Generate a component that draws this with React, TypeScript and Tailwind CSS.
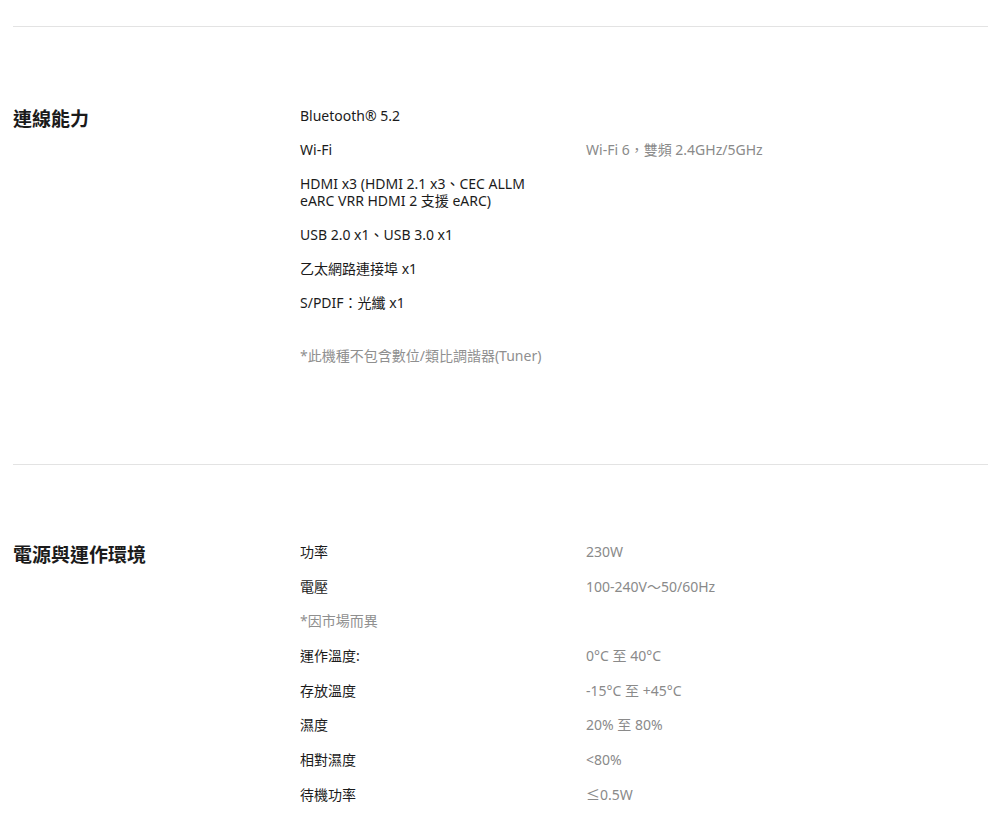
const font = { fontFamily: '"Noto Sans", "Noto Sans CJK TC", sans-serif' };

type Row = { label: React.ReactNode; value?: string; muted?: boolean };

const connectivity: Row[] = [
  { label: "Bluetooth® 5.2" },
  { label: "Wi-Fi", value: "Wi-Fi 6，雙頻 2.4GHz/5GHz" },
  {
    label: (
      <>
        HDMI x3 (HDMI 2.1 x3、CEC ALLM
        <br />
        eARC VRR HDMI 2 支援 eARC)
      </>
    ),
  },
  { label: "USB 2.0 x1、USB 3.0 x1" },
  { label: "乙太網路連接埠 x1" },
  { label: "S/PDIF：光纖 x1" },
];

const power: Row[] = [
  { label: "功率", value: "230W" },
  { label: "電壓", value: "100-240V～50/60Hz" },
  { label: "*因市場而異", muted: true },
  { label: "運作溫度:", value: "0°C 至 40°C" },
  { label: "存放溫度", value: "-15°C 至 +45°C" },
  { label: "濕度", value: "20% 至 80%" },
  { label: "相對濕度", value: "<80%" },
  { label: "待機功率", value: "≤0.5W" },
];

function SpecRow({ row }: { row: Row }) {
  return (
    <div className="grid grid-cols-[286px_1fr] text-[14px] leading-[17px]">
      <p className={row.muted ? "text-[#8f8f8f]" : "text-[#1b1b1b]"}>{row.label}</p>
      <p className="text-[#8a8a8a]">{row.value}</p>
    </div>
  );
}

function Section({
  title,
  rows,
  note,
  gap,
  className,
}: {
  title: string;
  rows: Row[];
  note?: string;
  gap: string;
  className: string;
}) {
  return (
    <section className={`border-t border-[#e3e3e3] ${className}`}>
      <div className="grid grid-cols-[287px_1fr]">
        <h2 className="text-[19px] font-bold leading-[24px] text-[#1b1b1b]">{title}</h2>
        <div>
          <div className={`flex flex-col ${gap}`}>
            {rows.map((row, i) => (
              <SpecRow key={i} row={row} />
            ))}
          </div>
          {note && <p className="mt-[36px] text-[14px] leading-[17px] text-[#8f8f8f]">{note}</p>}
        </div>
      </div>
    </section>
  );
}

export default function App() {
  return (
    <div className="min-h-[835px] bg-white pt-[26px]" style={font}>
      <div className="mx-[13px] mr-[12px]">
        <Section
          title="連線能力"
          rows={connectivity}
          note="*此機種不包含數位/類比調諧器(Tuner)"
          gap="gap-[17px]"
          className="pt-[80px] pb-[100px]"
        />
        <Section title="電源與運作環境" rows={power} gap="gap-[17.7px]" className="pt-[78px]" />
      </div>
    </div>
  );
}
